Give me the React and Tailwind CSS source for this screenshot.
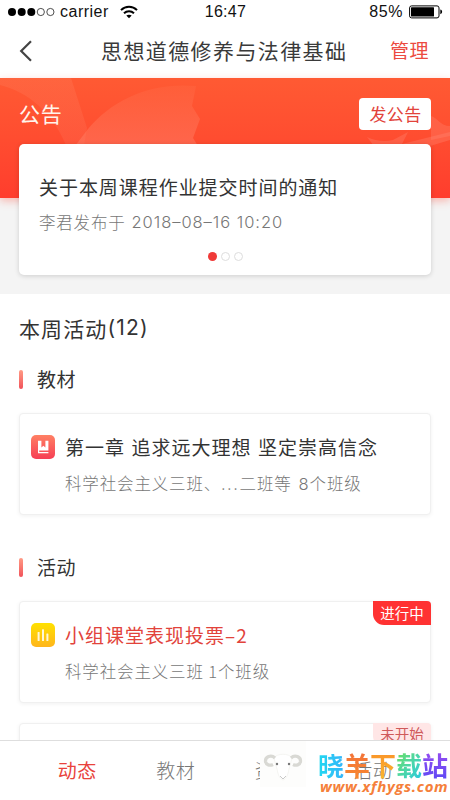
const tabs = [
  { label: "动态", active: true },
  { label: "教材" },
  { label: "资料" },
  { label: "活动" },
];

const siteName = [
  { char: "晓", className: "bg-linear-to-r from-[#1fd8f0] to-[#35b4fa]" },
  { char: "羊", className: "bg-linear-to-b from-[#f2703a] to-[#f98a2e]" },
  { char: "下", className: "bg-linear-to-b from-[#fa8f28] to-[#f9b92f]" },
  { char: "载", className: "bg-linear-to-br from-[#6fe04a] to-[#22c8e5]" },
  { char: "站", className: "bg-linear-to-b from-[#9a4bf0] to-[#5a48f5]" },
];

const StatusBar = () => (
  <div className="flex h-6 items-center justify-between pr-[7px] pl-2 font-['Liberation_Sans'] text-[16px] leading-6 text-[#111]">
    <div className="flex w-[150px] items-center">
      <svg width="47" height="10" viewBox="0 0 47 10">
        <g fill="#000">
          <circle cx="4" cy="5" r="4" />
          <circle cx="13.7" cy="5" r="4" />
          <circle cx="23.3" cy="5" r="4" />
        </g>
        <g fill="none" stroke="#222" strokeWidth="0.8">
          <circle cx="32.8" cy="5" r="3.6" />
          <circle cx="42.4" cy="5" r="3.6" />
        </g>
      </svg>
      <span className="ml-[5px] tracking-[0.5px]">carrier</span>
      <svg className="ml-[11px]" width="18" height="14" viewBox="0 0 18 14">
        <g fill="none" stroke="#000" strokeWidth="2">
          <path d="M1 5.1C5.5 .6 12.5 .6 17 5.1" />
          <path d="M4 8.3C6.8 5.6 11.2 5.6 14 8.3" />
        </g>
        <path d="M9 13.3L6.3 10.6C7.8 9.3 10.2 9.3 11.7 10.6Z" fill="#000" />
      </svg>
    </div>
    <span className="tracking-[0.3px]">16:47</span>
    <div className="flex w-[150px] items-center justify-end">
      <span className="mr-[6px] tracking-[0.6px]">85%</span>
      <svg width="34" height="14" viewBox="0 0 34 14">
        <rect x="0.6" y="0.9" width="29.4" height="12" rx="2" fill="none" stroke="#000" strokeWidth="1" />
        <rect x="2" y="2.3" width="23" height="9.2" rx="0.5" fill="#000" />
        <path d="M31.3 4.6C33.7 5 33.7 8.8 31.3 9.2Z" fill="#000" />
      </svg>
    </div>
  </div>
);

const NavHeader = () => (
  <div className="flex h-[53px] items-center pr-[21px] pl-[19px]">
    <svg width="14" height="22" viewBox="0 0 14 22">
      <path d="M12 1.3L2.2 11L12 20.7" fill="none" stroke="#444" strokeWidth="2.2" />
    </svg>
    <h1 className="ml-[68px] text-[21px] tracking-[1.4px] text-[#3a3a3a]">思想道德修养与法律基础</h1>
    <span className="ml-auto text-[19px] tracking-[0.5px] text-[#ec4a40]">管理</span>
  </div>
);

const HeroArt = () => (
  <svg className="absolute top-0 left-0" width="450" height="120" viewBox="0 0 450 120">
    <defs>
      <linearGradient id="petal" x1="0" y1="0" x2="0" y2="1">
        <stop offset="0" stopColor="#ff8a68" stopOpacity="0.12" />
        <stop offset="1" stopColor="#ff8068" stopOpacity="0.5" />
      </linearGradient>
      <linearGradient id="leaf" x1="0" y1="0" x2="0" y2="1">
        <stop offset="0" stopColor="#ff8a68" stopOpacity="0.22" />
        <stop offset="1" stopColor="#ff8068" stopOpacity="0.2" />
      </linearGradient>
    </defs>
    <path d="M0 0H71L87 50L84 67H66C52 34 28 14 0 7Z" fill="url(#leaf)" />
    <path d="M88 51C112 22 150 4 196 8L192 28L200 41L193 60L198 68H75Z" fill="url(#petal)" />
    <path d="M367 59C375 63 385 64 393 62L408 54L402 66L450 54V62L430 68H374Z" fill="#ff8f7c" fillOpacity="0.3" />
    <path d="M431 38C438 40 440 48 450 48V58L431 62Z" fill="#ff8f7c" fillOpacity="0.28" />
  </svg>
);

const Announcement = () => (
  <section className="relative mt-px h-[216px] bg-[#f4f4f4]">
    <div className="absolute inset-x-0 top-0 h-[120px] bg-linear-to-b from-[#ff5a33] to-[#ff3d2d] shadow-[0_3px_8px_rgba(255,70,50,0.35)]" />
    <HeroArt />
    <div className="relative px-[19px] pt-5">
      <div className="flex h-8 items-center justify-between">
        <h2 className="text-[21px] leading-[30px] tracking-[0.8px] text-[#fff5ec]">
          <span className="block h-8">公告</span>
        </h2>
        <button className="h-8 w-[72px] rounded-[4px] bg-white pl-[1px] text-[17px] leading-8 tracking-[0.3px] text-[#e2433b]">
          发公告
        </button>
      </div>
      <div className="mt-[14px] h-[131px] rounded-[5px] bg-white px-5 pt-[31px] shadow-[0_1px_5px_rgba(0,0,0,0.16)]">
        <p className="text-[19px] leading-6 tracking-[0.95px] text-[#333]">关于本周课程作业提交时间的通知</p>
        <p className="mt-[11px] flex text-[16.5px] leading-6 font-light tracking-[0.8px] text-[#777]">
          李君发布于
          <span className="ml-[6px] font-['Inter'] text-[16.5px] tracking-[0.95px]">2018–08–16 10:20</span>
        </p>
        <div className="mt-[18px] flex items-center justify-center gap-1">
          <span className="size-[9px] rounded-full bg-[#f03a38]" />
          <span className="size-[9px] rounded-full border border-[#ddd]" />
          <span className="size-[9px] rounded-full border border-[#ddd]" />
        </div>
      </div>
    </div>
  </section>
);

const SectionTitle = ({ children }) => (
  <div className="flex h-6 items-center">
    <span className="h-[19px] w-1 rounded-sm bg-linear-to-b from-[#ff9a85] to-[#f0505a]" />
    <h3 className="ml-[14px] text-[19px] leading-6 tracking-[0.6px] text-[#333]">{children}</h3>
  </div>
);

const BookIcon = () => (
  <svg width="24" height="24" viewBox="0 0 24 24">
    <defs>
      <linearGradient id="book" x1="0" y1="0" x2="0" y2="1">
        <stop offset="0" stopColor="#ff8064" />
        <stop offset="1" stopColor="#f63f55" />
      </linearGradient>
    </defs>
    <rect width="24" height="24" rx="5" fill="url(#book)" />
    <path d="M7 5.7H10.4V12.6L12.4 10.8L14.4 12.6V5.7H17.4V15.6H7Z" fill="#fff" />
    <path d="M7.6 15V17.7H17.4" fill="none" stroke="#fff" strokeWidth="1.2" />
  </svg>
);

const VoteIcon = () => (
  <svg width="24" height="24" viewBox="0 0 24 24">
    <defs>
      <linearGradient id="vote" x1="0" y1="0" x2="0" y2="1">
        <stop offset="0" stopColor="#ffe100" />
        <stop offset="1" stopColor="#ffb51c" />
      </linearGradient>
    </defs>
    <rect width="24" height="24" rx="5" fill="url(#vote)" />
    <g fill="#fff8d8">
      <rect x="6.6" y="9" width="2" height="9" rx="0.5" />
      <rect x="11" y="6.3" width="2" height="11.7" rx="0.5" />
      <rect x="15.4" y="10.4" width="2" height="7.6" rx="0.5" />
    </g>
  </svg>
);

const card = "relative h-[102px] rounded-[4px] border border-[#f0f0f0] bg-white shadow-[0_1px_4px_rgba(0,0,0,0.06)]";

const ActivityCard = ({ icon, title, titleColor, children }) => (
  <>
    <div className="flex items-center pt-[21px] pl-[11px]">
      {icon}
      <h4 className={`ml-[10px] text-[19px] leading-6 tracking-[1px] [word-spacing:1.3px] ${titleColor}`}>{title}</h4>
    </div>
    <p className="mt-[12px] pl-[45px] text-[16.5px] leading-6 font-light tracking-[0.85px] text-[#777]">{children}</p>
  </>
);

const SheepMark = () => (
  <svg width="46" height="46" viewBox="0 0 46 46">
    <rect width="46" height="46" fill="#fdfdfc" />
    <path d="M14 17C17 12 29 12 32 17L29 28C28 34 26 38 23 39C20 38 18 34 17 28Z" fill="#fff" stroke="#f0f0ec" strokeWidth="0.7" />
    <path
      d="M15 17C11 13 5 16 5.5 20.5C6 24 10 25 13 23.5"
      fill="none"
      stroke="#d9d9d4"
      strokeWidth="3.2"
    />
    <path
      d="M31 17C35 13 41 16 40.5 20.5C40 24 36 25 33 23.5"
      fill="none"
      stroke="#d9d9d4"
      strokeWidth="3.2"
    />
    <circle cx="17" cy="23" r="1.2" fill="#777" />
    <circle cx="29" cy="23" r="1.2" fill="#777" />
    <path d="M20 35L23 38L26 35" fill="none" stroke="#bbb" strokeWidth="0.8" />
  </svg>
);

const Watermark = () => (
  <div className="absolute top-0 right-0 flex w-[190px]">
    <SheepMark />
    <div className="ml-[12px] flex flex-col">
      <div className="mt-[8px] flex h-[32px] text-[26px] leading-[32px] font-bold">
        {siteName.map((item) => (
          <span key={item.char} className={`w-[26px] bg-clip-text text-transparent ${item.className}`}>
            {item.char}
          </span>
        ))}
      </div>
      <span className="mt-[-3px] ml-[2px] font-['Open_Sans'] text-[15px] leading-[16px] font-bold tracking-[0.65px] whitespace-nowrap text-[#f5803a] italic">
        www.xfhygs.com
      </span>
    </div>
  </div>
);

const TabBar = () => (
  <div className="relative h-[60px] border-t border-[#dedede] bg-white">
    <div className="flex h-full items-center pl-7">
      {tabs.map((tab) => (
        <span
          key={tab.label}
          className={`w-[98.5px] text-center text-[19px] tracking-[0.5px] ${tab.active ? "text-[#e9433c]" : "font-light text-[#777]"}`}
        >
          {tab.label}
        </span>
      ))}
    </div>
    <Watermark />
  </div>
);

const App = () => {
  return (
    <div className="flex h-[800px] w-[450px] flex-col overflow-hidden bg-white font-['Noto_Sans_CJK_SC',sans-serif]">
      <StatusBar />
      <NavHeader />
      <Announcement />
      <main className="min-h-0 flex-1 overflow-hidden px-[19px] pt-[22px]">
        <h2 className="flex text-[21px] leading-6 tracking-[1.1px] text-[#333]">
          本周活动<span className="font-['Inter'] text-[21px] tracking-[1.2px]">(12)</span>
        </h2>
        <div className="mt-[27px]">
          <SectionTitle>教材</SectionTitle>
        </div>
        <div className={`mt-[22px] ${card}`}>
          <ActivityCard icon={<BookIcon />} title="第一章 追求远大理想 坚定崇高信念" titleColor="text-[#333]">
            科学社会主义三班、<span className="tracking-[2px]">...</span>二班等
            <span className="ml-[7px]">
              <span className="font-['Inter']">8</span>个班级
            </span>
          </ActivityCard>
        </div>
        <div className="mt-[40px]">
          <SectionTitle>活动</SectionTitle>
        </div>
        <div className={`mt-[22px] ${card}`}>
          <ActivityCard icon={<VoteIcon />} title="小组课堂表现投票–2" titleColor="text-[#e2433b]">
            科学社会主义三班 1个班级
          </ActivityCard>
          <span className="absolute -top-px -right-px h-6 w-[58px] rounded-tr-[4px] rounded-bl-[11px] bg-[#ff3232] text-center text-[14.5px] leading-6 text-white">
            进行中
          </span>
        </div>
        <div className={`mt-5 ${card}`}>
          <span className="absolute -top-px -right-px h-6 w-[58px] rounded-tr-[4px] rounded-bl-[11px] bg-[#ffe6e6] text-center text-[14.5px] leading-[22px] text-[#cf5a5a]">
            未开始
          </span>
        </div>
      </main>
      <TabBar />
    </div>
  );
};

export default App;
